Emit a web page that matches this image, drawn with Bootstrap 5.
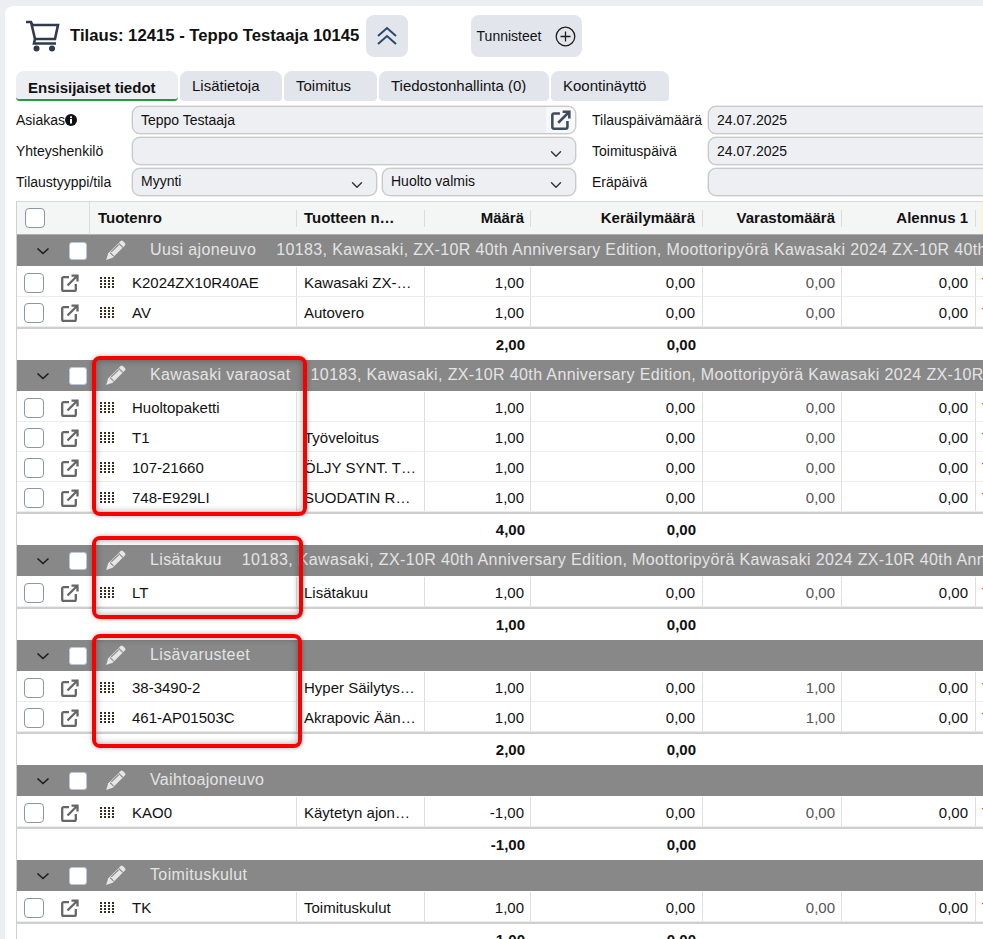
<!DOCTYPE html>
<html lang="fi">
<head>
<meta charset="utf-8">
<title>Tilaus 12415</title>
<link href="https://cdn.jsdelivr.net/npm/bootstrap@5.3.0/dist/css/bootstrap.min.css" rel="stylesheet">
<style>
html,body{height:939px;overflow:hidden;}
body{background:#eceef2;font-family:"Liberation Sans",Arial,sans-serif;font-size:14px;color:#111;position:relative;}
.sheet{margin:6px 0 0 5px;padding:9px 0 0 11px;background:#fff;border-top-left-radius:8px;height:933px;overflow:hidden;}
.titlebar{height:42px;margin-bottom:14px;}
.carticon{margin-left:9px;margin-right:10px;}
.titletext{font-size:16.7px;font-weight:700;margin:0 6px 0 0;width:290px;white-space:nowrap;}
.softbtn{background:#e2e5ec;border:0;border-radius:8px;height:42px;color:#111;font-size:14px;display:flex;align-items:center;justify-content:center;padding:0;}
.softbtn.up{width:42px;}
.softbtn.tags{width:111px;margin-left:63px;gap:14px;}
.tabrow{gap:2px;height:30px;margin-bottom:5px;}
.tabrow .nav-link{background:#e2e5ec;color:#111;height:30px;border-radius:8px 8px 4px 4px;padding:6px 0 0 12px;font-size:15px;line-height:18px;overflow:hidden;}
.tabrow .nav-link.active{background:#eceef2;color:#111;font-weight:700;border-bottom:2px solid #1f9a3c;padding:8px 0 0 12px;}
.tablabel{display:block;height:16px;overflow:hidden;}
.tab-a{width:162px;}.tab-b{width:102px;}.tab-c{width:93px;}.tab-d{width:170px;}.tab-e{width:118px;}
.formline{height:28px;margin-bottom:3px;}
.flabel{width:116px;flex:none;white-space:nowrap;line-height:28px;}
.fmain{width:444px;flex:none;}
.fsplit-a{width:245px;flex:none;}
.fsplit-b{width:194px;flex:none;margin-left:5px;}
.fgap{width:16px;flex:none;}
.fdate{width:320px;flex:none;}
.field.form-control,.field.form-select{height:28px;min-height:28px;background-color:#eeeff3;border:1px solid #c9c9c9;border-radius:8px;font-size:14px;line-height:18px;padding:3px 30px 3px 8px;color:#111;box-shadow:0 0 0 .5px #d6d6d6;}
.field.form-select{padding:2px 30px 4px 8px;background-position:right 11px top 10px;}
.openbox{background:#f7f8fa;border-radius:0 7px 7px 0;width:29px;height:26px;margin:1px 1px 1px -30px;display:flex;align-items:center;justify-content:center;flex:none;}
.gridbox{margin-top:5px;width:1100px;border-left:1px solid #cfcfcf;}
.gridt{table-layout:fixed;width:1100px;margin:0;border-collapse:separate;border-spacing:0;}
.gridt>thead>tr>th{height:34px;padding:0 7px;vertical-align:middle;background:#f4f5f5 linear-gradient(#dcdcdc,#dcdcdc) no-repeat right center/1px 17px;border-top:1px solid #d8d8d8;border-bottom:1px solid #b0b0b0;font-size:15px;font-weight:700;white-space:nowrap;overflow:hidden;text-overflow:ellipsis;color:#111;}
.gridt>thead>tr>th.pale{background:linear-gradient(90deg,#f4f5f5 6px,#fff6b8 6px);}
.gridt>thead>tr>th.first{padding:0 0 0 8px;border-right:1px solid #dcdcdc;background-image:none;}
.gridt>thead>tr>th.hcode{padding-left:8px;}
.gridt>thead>tr>th.hname{padding-left:7px;padding-right:28px;}
.gridt>thead>tr>th:nth-child(5),.gridt>thead>tr>th:nth-child(7){padding-right:8px;}
.gridt>tbody>tr>td{padding:0 6px;border:0;background:#fff;font-size:15px;color:#111;vertical-align:middle;white-space:nowrap;}
.gridt>tbody>tr.grouprow>td{height:32px;background:#888;padding:0;color:#e4e4e4;border-bottom:1px solid #fff;}
.groupin{display:flex;align-items:center;height:31px;font-size:16px;white-space:nowrap;letter-spacing:.37px;}
.groupin span.gtext{margin-bottom:2px;}
.chevslot{width:52px;display:flex;justify-content:center;flex:none;}
.gcheck.form-check-input{width:18px;height:18px;margin:0;background-color:#fff;border:1px solid #b9c7da;border-radius:3px;flex:none;}
.pen{margin-left:18px;margin-right:24px;flex:none;}
.gname{margin-right:20px;}
.gridt>tbody>tr.itemrow>td{height:30px;padding-top:4px;border-bottom:1px solid #ececec;}
.gridt>tbody>tr.itemrow>td:nth-child(6),.gridt>tbody>tr.itemrow>td:nth-child(8),.gridt>tbody>tr.sumrow>td:nth-child(5){padding-right:7px;}
.gridt>tbody>tr.itemrow>td.vl{border-right:1px solid #dfdfdf;}
.gridt>tbody>tr.itemrow>td.name{padding-left:7px;padding-right:7px;overflow:hidden;text-overflow:ellipsis;}
.gridt>tbody>tr.itemrow>td.stock{color:#555;}
.gridt>tbody>tr.itemrow>td.tail{color:#c00;}
.gridt>tbody>tr.itemrow>td.chk{padding:2px 0 0 7px;}
.gridt>tbody>tr.itemrow>td.opn{padding:2px 0 0 11px;}
.gridt>tbody>tr.itemrow>td.code{padding-left:10px;padding-right:0;}
.rowcheck.form-check-input{width:20px;height:20px;margin:0;display:block;border:1.5px solid #8c97a5;border-radius:4px;}
.grip{margin-right:18px;vertical-align:0;}
.gridt>tbody>tr.sumrow>td{height:33px;border-top:2px solid #cfcfcf;font-weight:700;padding-top:2px;}
.opnicon{display:block;color:#666;}
.mark-red{position:absolute;left:92px;border:4px solid #f80000;border-radius:8px;box-shadow:0 0 5px rgba(0,0,0,.3),inset 0 0 7px rgba(0,0,0,.35);pointer-events:none;}
.mark-a{top:356px;width:215px;height:160px;}
.mark-b{top:536px;width:211px;height:83px;}
.mark-c{top:634px;width:210px;height:114px;}
</style>
</head>
<body>
<svg width="0" height="0" class="d-block" aria-hidden="true">
<symbol id="ic-grip" viewBox="0 0 14 11"><g fill="#3a2f1c"><rect x="0" y="0" width="2" height="2"/><rect x="4" y="0" width="2" height="2"/><rect x="8" y="0" width="2" height="2"/><rect x="12" y="0" width="2" height="2"/><rect x="0" y="3" width="2" height="2"/><rect x="4" y="3" width="2" height="2"/><rect x="8" y="3" width="2" height="2"/><rect x="12" y="3" width="2" height="2"/><rect x="0" y="6" width="2" height="2"/><rect x="4" y="6" width="2" height="2"/><rect x="8" y="6" width="2" height="2"/><rect x="12" y="6" width="2" height="2"/><rect x="0" y="9" width="2" height="2"/><rect x="4" y="9" width="2" height="2"/><rect x="8" y="9" width="2" height="2"/><rect x="12" y="9" width="2" height="2"/></g></symbol>
<symbol id="ic-open" viewBox="0 0 18 18"><path d="M8 3.200H2.600a1.400 1.400 0 0 0-1.400 1.400v10.800a1.400 1.400 0 0 0 1.400 1.400h10.800a1.400 1.400 0 0 0 1.400-1.400V10" fill="none" stroke="currentColor" stroke-width="2.300"/><path d="M6.500 11.500 16 2M10.500 1.600h6v6" fill="none" stroke="currentColor" stroke-width="2.300"/></symbol>
<symbol id="ic-pen" viewBox="0 0 22 22"><path d="M16.200 1.200a2 2 0 0 1 2.700 0l1.900 1.900a2 2 0 0 1 0 2.700L8 18.600 1.200 21l2.200-7z" fill="#e6e6e6"/><path d="M14.400 3.600l4.200 4.200M5.400 13.200l3.600 3.600M6.600 12.400l7.600-7.400" fill="none" stroke="#8a8a8a" stroke-width="1.200"/></symbol>
<symbol id="ic-chev" viewBox="0 0 14 8"><path d="M1.500 1.500 7 6.500l5.500-5" fill="none" stroke="#1c1c1c" stroke-width="1.600"/></symbol>
</svg>

<div class="sheet">
  <div class="titlebar d-flex align-items-center">
    <svg class="carticon" width="35" height="32" viewBox="0 0 35 32"><path d="M1 2h5l1.500 3M7.500 5H33l-3 14H10L6 2M10 19l-1 4.500h22" fill="none" stroke="#2f3c4e" stroke-width="2.600"/><circle cx="11.500" cy="28.500" r="3" fill="#2f3c4e"/><circle cx="27" cy="28.500" r="3" fill="#2f3c4e"/></svg>
    <h1 class="titletext">Tilaus: 12415 - Teppo Testaaja 10145</h1>
    <button type="button" class="softbtn up" aria-label="Piilota"><svg width="20" height="20" viewBox="0 0 20 20"><path d="M1 10 10 2l9 8M1 18 10 10l9 8" fill="none" stroke="#2c4868" stroke-width="2"/></svg></button>
    <button type="button" class="softbtn tags">Tunnisteet<svg width="21" height="21" viewBox="0 0 21 21"><circle cx="10.500" cy="10.500" r="9.300" fill="none" stroke="#1c1c1c" stroke-width="1.300"/><path d="M10.500 5.500v10M5.500 10.500h10" stroke="#1c1c1c" stroke-width="1.300"/></svg></button>
  </div>

  <nav class="nav tabrow">
    <a class="nav-link active tab-a" href="#">Ensisijaiset tiedot</a>
    <a class="nav-link tab-b" href="#"><span class="tablabel">Lisätietoja</span></a>
    <a class="nav-link tab-c" href="#"><span class="tablabel">Toimitus</span></a>
    <a class="nav-link tab-d" href="#"><span class="tablabel">Tiedostonhallinta (0)</span></a>
    <a class="nav-link tab-e" href="#"><span class="tablabel">Koontinäyttö</span></a>
  </nav>

  <div class="formline d-flex">
    <div class="flabel">Asiakas<svg class="ms-0 align-top mt-2" width="12" height="12" viewBox="0 0 12 12"><circle cx="6" cy="6" r="6" fill="#111"/><rect x="5" y="5" width="2" height="4.500" fill="#fff"/><rect x="5" y="2.300" width="2" height="1.800" fill="#fff"/></svg></div>
    <div class="fmain d-flex"><input class="field form-control" value="Teppo Testaaja" aria-label="Asiakas"><span class="openbox"><svg width="20" height="20" style="color:#3f4a5a"><use href="#ic-open"/></svg></span></div>
    <div class="fgap"></div>
    <div class="flabel">Tilauspäivämäärä</div>
    <div class="fdate"><input class="field form-control" value="24.07.2025" aria-label="Tilauspäivämäärä"></div>
  </div>
  <div class="formline d-flex">
    <div class="flabel">Yhteyshenkilö</div>
    <div class="fmain"><select class="field form-select" aria-label="Yhteyshenkilö"><option></option></select></div>
    <div class="fgap"></div>
    <div class="flabel">Toimituspäivä</div>
    <div class="fdate"><input class="field form-control" value="24.07.2025" aria-label="Toimituspäivä"></div>
  </div>
  <div class="formline d-flex">
    <div class="flabel">Tilaustyyppi/tila</div>
    <div class="fmain d-flex">
      <div class="fsplit-a"><select class="field form-select" aria-label="Tilaustyyppi"><option>Myynti</option></select></div>
      <div class="fsplit-b"><select class="field form-select" aria-label="Tila"><option>Huolto valmis</option></select></div>
    </div>
    <div class="fgap"></div>
    <div class="flabel">Eräpäivä</div>
    <div class="fdate"><input class="field form-control" value="" aria-label="Eräpäivä"></div>
  </div>

  <div class="gridbox">
  <table class="table gridt">
    <colgroup><col style="width:33px"><col style="width:40px"><col style="width:207px"><col style="width:128px"><col style="width:106px"><col style="width:172px"><col style="width:139px"><col style="width:134px"><col style="width:141px"></colgroup>
    <thead><tr>
      <th colspan="2" class="first"><input class="form-check-input rowcheck" type="checkbox" aria-label="Valitse kaikki"></th>
      <th class="hcode">Tuotenro</th><th class="hname">Tuotteen nimi</th><th class="text-end">Määrä</th><th class="text-end">Keräilymäärä</th><th class="text-end">Varastomäärä</th><th class="text-end">Alennus 1</th><th class="pale"></th>
    </tr></thead>
    <tbody>
      <tr class="grouprow"><td colspan="9"><div class="groupin"><span class="chevslot"><svg width="14" height="8"><use href="#ic-chev"/></svg></span><input class="form-check-input gcheck" type="checkbox" aria-label="Valitse"><svg class="pen" width="21" height="21"><use href="#ic-pen"/></svg><span class="gtext gname">Uusi ajoneuvo</span><span class="gtext">10183, Kawasaki, ZX-10R 40th Anniversary Edition, Moottoripyörä Kawasaki 2024 ZX-10R 40th Anniversary Edition</span></div></td></tr>
      <tr class="itemrow"><td class="chk"><input class="form-check-input rowcheck" type="checkbox" aria-label="Valitse"></td><td class="opn"><svg width="18" height="18" class="opnicon"><use href="#ic-open"/></svg></td><td class="code vl"><svg class="grip" width="14" height="11"><use href="#ic-grip"/></svg>K2024ZX10R40AE</td><td class="name vl">Kawasaki ZX-10R</td><td class="text-end vl">1,00</td><td class="text-end vl">0,00</td><td class="text-end vl stock">0,00</td><td class="text-end vl">0,00</td><td class="tail">T</td></tr>
      <tr class="itemrow"><td class="chk"><input class="form-check-input rowcheck" type="checkbox" aria-label="Valitse"></td><td class="opn"><svg width="18" height="18" class="opnicon"><use href="#ic-open"/></svg></td><td class="code vl"><svg class="grip" width="14" height="11"><use href="#ic-grip"/></svg>AV</td><td class="name vl">Autovero</td><td class="text-end vl">1,00</td><td class="text-end vl">0,00</td><td class="text-end vl stock">0,00</td><td class="text-end vl">0,00</td><td class="tail">T</td></tr>
      <tr class="sumrow"><td colspan="2"></td><td></td><td></td><td class="text-end">2,00</td><td class="text-end">0,00</td><td></td><td></td><td></td></tr>

      <tr class="grouprow"><td colspan="9"><div class="groupin"><span class="chevslot"><svg width="14" height="8"><use href="#ic-chev"/></svg></span><input class="form-check-input gcheck" type="checkbox" aria-label="Valitse"><svg class="pen" width="21" height="21"><use href="#ic-pen"/></svg><span class="gtext gname">Kawasaki varaosat</span><span class="gtext">10183, Kawasaki, ZX-10R 40th Anniversary Edition, Moottoripyörä Kawasaki 2024 ZX-10R 40th Anniversary Edition</span></div></td></tr>
      <tr class="itemrow"><td class="chk"><input class="form-check-input rowcheck" type="checkbox" aria-label="Valitse"></td><td class="opn"><svg width="18" height="18" class="opnicon"><use href="#ic-open"/></svg></td><td class="code vl"><svg class="grip" width="14" height="11"><use href="#ic-grip"/></svg>Huoltopaketti</td><td class="name vl"></td><td class="text-end vl">1,00</td><td class="text-end vl">0,00</td><td class="text-end vl stock">0,00</td><td class="text-end vl">0,00</td><td class="tail">T</td></tr>
      <tr class="itemrow"><td class="chk"><input class="form-check-input rowcheck" type="checkbox" aria-label="Valitse"></td><td class="opn"><svg width="18" height="18" class="opnicon"><use href="#ic-open"/></svg></td><td class="code vl"><svg class="grip" width="14" height="11"><use href="#ic-grip"/></svg>T1</td><td class="name vl">Työveloitus</td><td class="text-end vl">1,00</td><td class="text-end vl">0,00</td><td class="text-end vl stock">0,00</td><td class="text-end vl">0,00</td><td class="tail">T</td></tr>
      <tr class="itemrow"><td class="chk"><input class="form-check-input rowcheck" type="checkbox" aria-label="Valitse"></td><td class="opn"><svg width="18" height="18" class="opnicon"><use href="#ic-open"/></svg></td><td class="code vl"><svg class="grip" width="14" height="11"><use href="#ic-grip"/></svg>107-21660</td><td class="name vl">ÖLJY SYNT. TÄYS</td><td class="text-end vl">1,00</td><td class="text-end vl">0,00</td><td class="text-end vl stock">0,00</td><td class="text-end vl">0,00</td><td class="tail">T</td></tr>
      <tr class="itemrow"><td class="chk"><input class="form-check-input rowcheck" type="checkbox" aria-label="Valitse"></td><td class="opn"><svg width="18" height="18" class="opnicon"><use href="#ic-open"/></svg></td><td class="code vl"><svg class="grip" width="14" height="11"><use href="#ic-grip"/></svg>748-E929LI</td><td class="name vl">SUODATIN RUNKO</td><td class="text-end vl">1,00</td><td class="text-end vl">0,00</td><td class="text-end vl stock">0,00</td><td class="text-end vl">0,00</td><td class="tail">T</td></tr>
      <tr class="sumrow"><td colspan="2"></td><td></td><td></td><td class="text-end">4,00</td><td class="text-end">0,00</td><td></td><td></td><td></td></tr>

      <tr class="grouprow"><td colspan="9"><div class="groupin"><span class="chevslot"><svg width="14" height="8"><use href="#ic-chev"/></svg></span><input class="form-check-input gcheck" type="checkbox" aria-label="Valitse"><svg class="pen" width="21" height="21"><use href="#ic-pen"/></svg><span class="gtext gname">Lisätakuu</span><span class="gtext">10183, Kawasaki, ZX-10R 40th Anniversary Edition, Moottoripyörä Kawasaki 2024 ZX-10R 40th Anniversary Edition</span></div></td></tr>
      <tr class="itemrow"><td class="chk"><input class="form-check-input rowcheck" type="checkbox" aria-label="Valitse"></td><td class="opn"><svg width="18" height="18" class="opnicon"><use href="#ic-open"/></svg></td><td class="code vl"><svg class="grip" width="14" height="11"><use href="#ic-grip"/></svg>LT</td><td class="name vl">Lisätakuu</td><td class="text-end vl">1,00</td><td class="text-end vl">0,00</td><td class="text-end vl stock">0,00</td><td class="text-end vl">0,00</td><td class="tail">T</td></tr>
      <tr class="sumrow"><td colspan="2"></td><td></td><td></td><td class="text-end">1,00</td><td class="text-end">0,00</td><td></td><td></td><td></td></tr>

      <tr class="grouprow"><td colspan="9"><div class="groupin"><span class="chevslot"><svg width="14" height="8"><use href="#ic-chev"/></svg></span><input class="form-check-input gcheck" type="checkbox" aria-label="Valitse"><svg class="pen" width="21" height="21"><use href="#ic-pen"/></svg><span class="gtext gname">Lisävarusteet</span></div></td></tr>
      <tr class="itemrow"><td class="chk"><input class="form-check-input rowcheck" type="checkbox" aria-label="Valitse"></td><td class="opn"><svg width="18" height="18" class="opnicon"><use href="#ic-open"/></svg></td><td class="code vl"><svg class="grip" width="14" height="11"><use href="#ic-grip"/></svg>38-3490-2</td><td class="name vl">Hyper Säilytyslaukku</td><td class="text-end vl">1,00</td><td class="text-end vl">0,00</td><td class="text-end vl stock">1,00</td><td class="text-end vl">0,00</td><td class="tail">T</td></tr>
      <tr class="itemrow"><td class="chk"><input class="form-check-input rowcheck" type="checkbox" aria-label="Valitse"></td><td class="opn"><svg width="18" height="18" class="opnicon"><use href="#ic-open"/></svg></td><td class="code vl"><svg class="grip" width="14" height="11"><use href="#ic-grip"/></svg>461-AP01503C</td><td class="name vl">Akrapovic Äänen</td><td class="text-end vl">1,00</td><td class="text-end vl">0,00</td><td class="text-end vl stock">1,00</td><td class="text-end vl">0,00</td><td class="tail">T</td></tr>
      <tr class="sumrow"><td colspan="2"></td><td></td><td></td><td class="text-end">2,00</td><td class="text-end">0,00</td><td></td><td></td><td></td></tr>

      <tr class="grouprow"><td colspan="9"><div class="groupin"><span class="chevslot"><svg width="14" height="8"><use href="#ic-chev"/></svg></span><input class="form-check-input gcheck" type="checkbox" aria-label="Valitse"><svg class="pen" width="21" height="21"><use href="#ic-pen"/></svg><span class="gtext gname">Vaihtoajoneuvo</span></div></td></tr>
      <tr class="itemrow"><td class="chk"><input class="form-check-input rowcheck" type="checkbox" aria-label="Valitse"></td><td class="opn"><svg width="18" height="18" class="opnicon"><use href="#ic-open"/></svg></td><td class="code vl"><svg class="grip" width="14" height="11"><use href="#ic-grip"/></svg>KAO0</td><td class="name vl">Käytetyn ajoneuvon</td><td class="text-end vl">-1,00</td><td class="text-end vl">0,00</td><td class="text-end vl stock">0,00</td><td class="text-end vl">0,00</td><td class="tail">T</td></tr>
      <tr class="sumrow"><td colspan="2"></td><td></td><td></td><td class="text-end">-1,00</td><td class="text-end">0,00</td><td></td><td></td><td></td></tr>

      <tr class="grouprow"><td colspan="9"><div class="groupin"><span class="chevslot"><svg width="14" height="8"><use href="#ic-chev"/></svg></span><input class="form-check-input gcheck" type="checkbox" aria-label="Valitse"><svg class="pen" width="21" height="21"><use href="#ic-pen"/></svg><span class="gtext gname">Toimituskulut</span></div></td></tr>
      <tr class="itemrow"><td class="chk"><input class="form-check-input rowcheck" type="checkbox" aria-label="Valitse"></td><td class="opn"><svg width="18" height="18" class="opnicon"><use href="#ic-open"/></svg></td><td class="code vl"><svg class="grip" width="14" height="11"><use href="#ic-grip"/></svg>TK</td><td class="name vl">Toimituskulut</td><td class="text-end vl">1,00</td><td class="text-end vl">0,00</td><td class="text-end vl stock">0,00</td><td class="text-end vl">0,00</td><td class="tail">T</td></tr>
      <tr class="sumrow"><td colspan="2"></td><td></td><td></td><td class="text-end">1,00</td><td class="text-end">0,00</td><td></td><td></td><td></td></tr>
    </tbody>
  </table>
  </div>
</div>
<div class="mark-red mark-a"></div>
<div class="mark-red mark-b"></div>
<div class="mark-red mark-c"></div>
</body>
</html>
